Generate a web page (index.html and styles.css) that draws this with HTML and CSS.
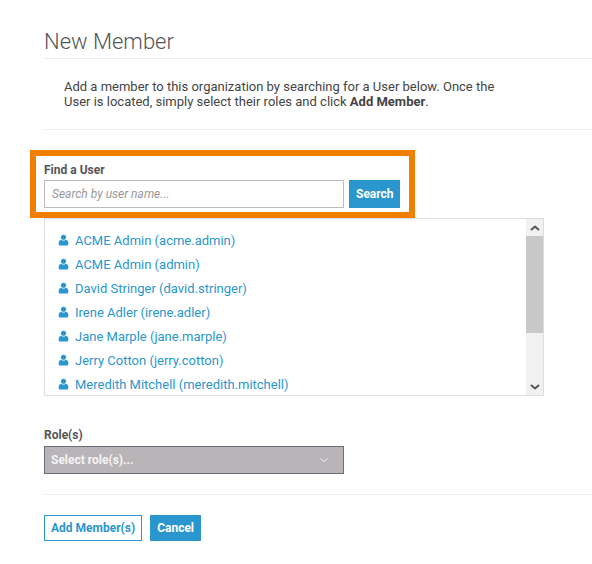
FILE: index.html
```html
<!DOCTYPE html>
<html lang="en">
<head>
<meta charset="utf-8">
<title>New Member</title>
<link rel="stylesheet" href="styles.css">
</head>
<body>
<main class="page">
  <h1 class="title">New Member</h1>
  <p class="intro">Add a member to this organization by searching for a User below. Once the User is located, simply select their roles and click <strong>Add Member</strong>.</p>
  <section class="find">
    <label class="label" for="q">Find a User</label>
    <div class="find-row">
      <input id="q" class="search-input" type="text" placeholder="Search by user name...">
      <button class="btn btn-primary search-btn" type="button">Search</button>
    </div>
  </section>
  <div class="list-box">
    <ul class="users">
      <li><svg class="user-icon" viewBox="0 0 12 12"><circle cx="6" cy="3" r="2.8"/><path d="M.8 11V8.6C.8 7 2 6 3.4 5.6 4.2 6.300 5 6.600 6 6.600s1.800-.3 2.600-1C10 6 11.200 7 11.200 8.600V11q0 1-1 1H1.800q-1 0-1-1z"/></svg><a href="#">ACME Admin (acme.admin)</a></li>
      <li><svg class="user-icon" viewBox="0 0 12 12"><circle cx="6" cy="3" r="2.8"/><path d="M.8 11V8.6C.8 7 2 6 3.4 5.6 4.2 6.300 5 6.600 6 6.600s1.800-.3 2.600-1C10 6 11.200 7 11.200 8.600V11q0 1-1 1H1.800q-1 0-1-1z"/></svg><a href="#">ACME Admin (admin)</a></li>
      <li><svg class="user-icon" viewBox="0 0 12 12"><circle cx="6" cy="3" r="2.8"/><path d="M.8 11V8.6C.8 7 2 6 3.4 5.6 4.2 6.300 5 6.600 6 6.600s1.800-.3 2.600-1C10 6 11.200 7 11.200 8.600V11q0 1-1 1H1.800q-1 0-1-1z"/></svg><a href="#">David Stringer (david.stringer)</a></li>
      <li><svg class="user-icon" viewBox="0 0 12 12"><circle cx="6" cy="3" r="2.8"/><path d="M.8 11V8.6C.8 7 2 6 3.4 5.6 4.2 6.300 5 6.600 6 6.600s1.800-.3 2.600-1C10 6 11.200 7 11.200 8.600V11q0 1-1 1H1.800q-1 0-1-1z"/></svg><a href="#">Irene Adler (irene.adler)</a></li>
      <li><svg class="user-icon" viewBox="0 0 12 12"><circle cx="6" cy="3" r="2.8"/><path d="M.8 11V8.6C.8 7 2 6 3.4 5.6 4.2 6.300 5 6.600 6 6.600s1.800-.3 2.600-1C10 6 11.200 7 11.200 8.600V11q0 1-1 1H1.800q-1 0-1-1z"/></svg><a href="#">Jane Marple (jane.marple)</a></li>
      <li><svg class="user-icon" viewBox="0 0 12 12"><circle cx="6" cy="3" r="2.8"/><path d="M.8 11V8.6C.8 7 2 6 3.4 5.6 4.2 6.300 5 6.600 6 6.600s1.800-.3 2.600-1C10 6 11.200 7 11.200 8.600V11q0 1-1 1H1.800q-1 0-1-1z"/></svg><a href="#">Jerry Cotton (jerry.cotton)</a></li>
      <li><svg class="user-icon" viewBox="0 0 12 12"><circle cx="6" cy="3" r="2.8"/><path d="M.8 11V8.6C.8 7 2 6 3.4 5.6 4.2 6.300 5 6.600 6 6.600s1.800-.3 2.600-1C10 6 11.200 7 11.200 8.600V11q0 1-1 1H1.800q-1 0-1-1z"/></svg><a href="#">Meredith Mitchell (meredith.mitchell)</a></li>
    </ul>
    <div class="scrollbar">
      <svg class="arrow" viewBox="0 0 10 6"><path d="M1 5l4-3.500L9 5"/></svg>
      <div class="thumb"></div>
      <div class="track"></div>
      <svg class="arrow" viewBox="0 0 10 6"><path d="M1 1l4 3.500L9 1"/></svg>
    </div>
  </div>
  <label class="label role-label">Role(s)</label>
  <div class="role-select"><span>Select role(s)...</span><svg class="chev" viewBox="0 0 10 6"><path d="M1.500 1.500L5 4.500l3.500-3"/></svg></div>
  <div class="actions">
    <button class="btn btn-outline" type="button">Add Member(s)</button>
    <button class="btn btn-primary" type="button">Cancel</button>
  </div>
</main>
</body>
</html>
```

FILE: styles.css
```css
* { box-sizing: border-box; }
html, body { margin: 0; padding: 0; background: #fff; }
body { font-family: Roboto, "Liberation Sans", sans-serif; font-size: 13px; color: #444; overflow: hidden; }
.page { width: 592px; height: 564px; padding: 28px 0 0 44px; overflow: hidden; }
.title { margin: 0; font-size: 22px; line-height: 28px; font-weight: 300; color: #555; height: 31px; border-bottom: 1px solid #eee; }
.intro { margin: 0; padding: 20px 90px 19px 20px; line-height: 15px; font-size: 13px; color: #444; border-bottom: 1px solid #eee; height: 71px; }
.intro strong { font-weight: 700; }
.find { margin: 20px 0 0 -14px; width: 385px; height: 68px; border: 6px solid #f07f00; padding: 6px 8px 0; }
.label { display: block; font-size: 12px; font-weight: 700; line-height: 16px; color: #555; }
.find-row { display: flex; gap: 5px; margin-top: 2px; }
.search-input { width: 300px; height: 28px; padding: 0 7px; border: 1px solid #bbb; font: italic 12px Roboto, sans-serif; color: #444; background: #fff; outline: none; }
.search-input::placeholder { color: #999; opacity: 1; }
.btn { font-family: Roboto, sans-serif; font-size: 12px; font-weight: 700; height: 26px; padding: 0 6px; border: 1px solid #2a96cd; border-radius: 0; }
.btn-primary { background: #2a96cd; color: #fff; }
.btn-outline { background: #fff; color: #2a96cd; }
.search-btn { height: 28px; width: 51px; }
.list-box { width: 500px; height: 178px; border: 1px solid #ddd; display: flex; overflow: hidden; }
.users { list-style: none; margin: 0; padding: 9px 0 0 13px; flex: 1; overflow: hidden; }
.users li { display: flex; align-items: center; height: 24px; gap: 6px; white-space: nowrap; }
.users a { color: #2a96cd; text-decoration: none; font-size: 13px; }
.user-icon { width: 11px; height: 12px; fill: #2a96cd; margin-bottom: 1px; }
.scrollbar { width: 17px; display: flex; flex-direction: column; background: #f1f1f1; }
.arrow { width: 10px; height: 6px; margin: 6px auto 5px; fill: none; stroke: #555; stroke-width: 2; flex: none; }
.thumb { height: 97px; background: #c8c8c8; flex: none; }
.track { flex: 1; }
.role-label { margin-top: 31px; }
.role-select { display: flex; align-items: center; justify-content: space-between; width: 300px; height: 28px; margin-top: 3px; padding: 0 14px 0 6px; background: #b9b4b7; border: 1px solid #6b7078; color: #f4f4f4; font-size: 12px; font-weight: 700; }
.chev { width: 10px; height: 6px; fill: none; stroke: #f4f4f4; stroke-width: 1; }
.actions { margin-top: 20px; padding-top: 20px; border-top: 1px solid #eee; display: flex; gap: 8px; }
```
